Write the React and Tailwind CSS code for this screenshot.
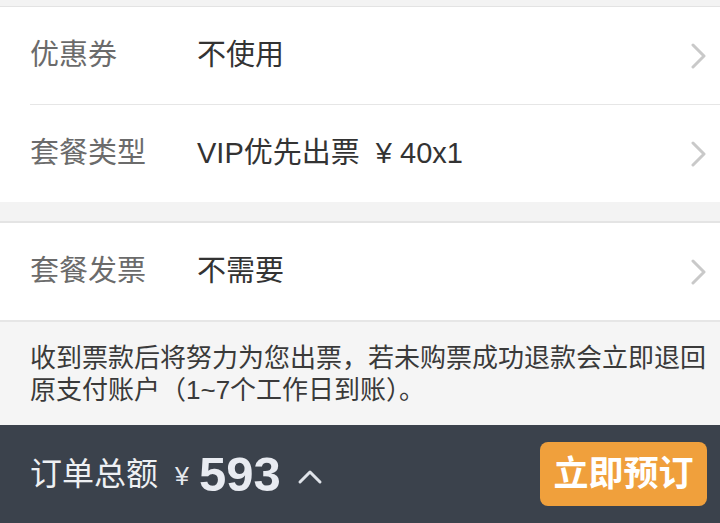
const font = { fontFamily: '"Liberation Sans", "Noto Sans CJK SC", sans-serif' };

function Chevron() {
  return (
    <svg width="16" height="26" viewBox="0 0 16 26" className="shrink-0">
      <path d="M2 2 L13 13 L2 24" fill="none" stroke="#c9c9c9" strokeWidth="3" strokeLinecap="round" strokeLinejoin="round" />
    </svg>
  );
}

function Row({ label, value, className = '' }) {
  return (
    <div className={`flex items-center h-[97px] pl-[30px] pr-[13px] ${className}`}>
      <span className="w-[167px] shrink-0 text-[29px] text-[#6b6b6b]">{label}</span>
      <span className="flex-1 text-[29px] text-[#333]">{value}</span>
      <Chevron />
    </div>
  );
}

export default function App() {
  return (
    <div className="w-[720px] h-[523px] overflow-hidden flex flex-col bg-[#f5f5f5]" style={font}>
      {/* top strip */}
      <div className="h-[7px] shrink-0 bg-[#f3f3f3] border-b border-[#e3e3e3]" />

      <div className="bg-white shrink-0">
        <Row label="优惠券" value="不使用" />
        <div className="ml-[30px] h-px bg-[#e6e6e6]" />
        <Row label="套餐类型" value="VIP优先出票  ¥ 40x1" className="h-[96px] whitespace-pre" />
      </div>

      <div className="h-[21px] shrink-0 bg-[#f3f3f3] border-b-[2px] border-[#e4e4e4]" />

      <div className="bg-white shrink-0 border-b-[2px] border-[#e6e6e6]">
        <Row label="套餐发票" value="不需要" className="h-[95px]" />
      </div>

      <div className="pl-[30px] pr-[8px] pt-[20px] h-[103px] shrink-0 text-[26px] leading-[32px] text-[#3a3a3a]">
        收到票款后将努力为您出票，若未购票成功退款会立即退回原支付账户（1~7个工作日到账）。
      </div>

      {/* bottom bar */}
      <div className="flex-1 bg-[#3b424c] flex items-center pl-[30px] pr-[13px]">
        <span className="text-[32px] text-[#eef0f3]">订单总额</span>
        <span className="ml-[17px] text-[25px] text-[#e6e9ee] mt-[6px]">¥</span>
        <span className="ml-[10px] text-[49px] font-bold text-[#e8ebf1] leading-none">593</span>
        <svg width="26" height="16" viewBox="0 0 26 16" className="ml-[16px] mt-[6px]">
          <path d="M3 13 L13 3 L23 13" fill="none" stroke="#dfe3e9" strokeWidth="3" strokeLinecap="round" strokeLinejoin="round" />
        </svg>
        <div className="flex-1" />
        <button className="w-[167px] h-[64px] rounded-[8px] bg-[#f0a03c] text-white text-[35px] font-bold flex items-center justify-center">
          立即预订
        </button>
      </div>
    </div>
  );
}
